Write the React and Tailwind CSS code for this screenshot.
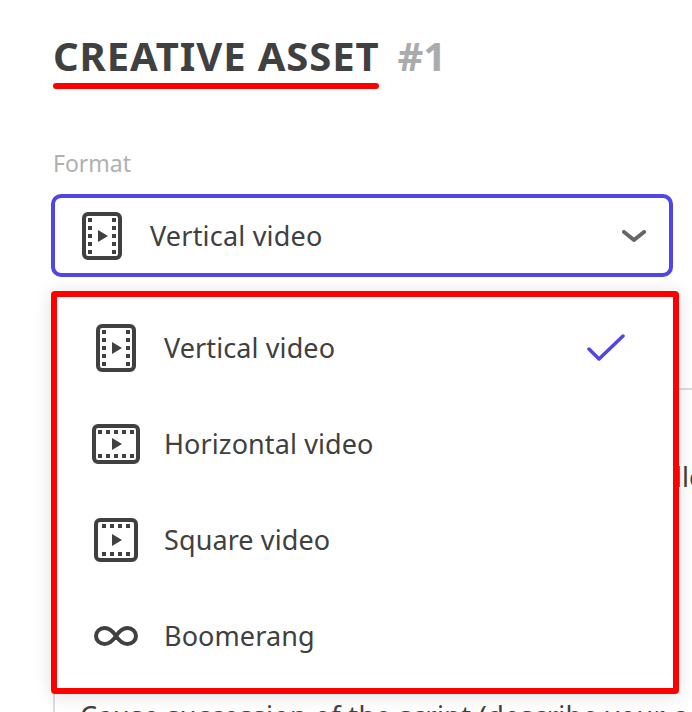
import React from "react";

const F = "[font-family:'Noto_Sans',sans-serif]";

function FilmV({ className }) {
  const ys = [6, 14, 22, 30, 38];
  return (
    <svg viewBox="0 0 40 48" className={className} fill="none">
      <rect x="2" y="2" width="36" height="44" rx="4" stroke="#404040" strokeWidth="4" />
      {ys.map((y) => (
        <g key={y} fill="#404040">
          <rect x="6" y={y} width="4" height="4" />
          <rect x="30" y={y} width="4" height="4" />
        </g>
      ))}
      <path d="M16 18 L26 24 L16 30 Z" fill="#404040" />
    </svg>
  );
}

function FilmH({ className }) {
  const xs = [6, 14, 22, 30, 38];
  return (
    <svg viewBox="0 0 48 40" className={className} fill="none">
      <rect x="2" y="2" width="44" height="36" rx="4" stroke="#404040" strokeWidth="4" />
      {xs.map((x) => (
        <g key={x} fill="#404040">
          <rect x={x} y="6" width="4" height="4" />
          <rect x={x} y="30" width="4" height="4" />
        </g>
      ))}
      <path d="M20 14 L30 20 L20 26 Z" fill="#404040" />
    </svg>
  );
}

function FilmS({ className }) {
  const xs = [8, 16, 24, 32];
  return (
    <svg viewBox="0 0 44 44" className={className} fill="none">
      <rect x="2" y="2" width="40" height="40" rx="4" stroke="#404040" strokeWidth="4" />
      {xs.map((x) => (
        <g key={x} fill="#404040">
          <rect x={x} y="6" width="4" height="4" />
          <rect x={x} y="34" width="4" height="4" />
        </g>
      ))}
      <path d="M18 16 L28 22 L18 28 Z" fill="#404040" />
    </svg>
  );
}

function Inf({ className }) {
  return (
    <svg viewBox="0 0 44 20" className={className} fill="none">
      <path
        d="M22 10 C18 4 14 2 10.500 2 C5.800 2 2 5.600 2 10 C2 14.400 5.800 18 10.500 18 C14 18 18 16 22 10 C26 4 30 2 33.500 2 C38.200 2 42 5.600 42 10 C42 14.400 38.200 18 33.500 18 C30 18 26 16 22 10 Z"
        stroke="#404040"
        strokeWidth="4"
      />
    </svg>
  );
}

function Row({ icon, label, check }) {
  return (
    <div className="h-24 flex items-center relative shrink-0">
      <div className="w-11 ml-[37px] flex justify-center shrink-0">{icon}</div>
      <span className="ml-[26px] text-[27px] text-[#404040] tracking-[0.1px]">{label}</span>
      {check && (
        <svg viewBox="0 0 38 28" className="absolute left-[530px] top-[34px] w-[38px] h-[28px]" fill="none">
          <path d="M2 15 L12 25 L36 2" stroke="#4f46e5" strokeWidth="3.500" strokeLinecap="round" strokeLinejoin="round" />
        </svg>
      )}
    </div>
  );
}

export default function App() {
  return (
    <div className={`relative w-[692px] h-[712px] overflow-hidden bg-white ${F}`}>
      <div className="pl-[53px] pt-[31px]">
        <div className="flex items-start">
          <div className="flex flex-col">
            <span className="text-[40px] leading-[50px] font-bold text-[#404040] whitespace-nowrap tracking-[0.9px]">CREATIVE ASSET</span>
            <div className="h-[6px] mt-[2px] rounded-full bg-[#ff0000]" />
          </div>
          <span className="ml-[18px] text-[40px] leading-[50px] font-bold text-[#ababab]">#1</span>
        </div>
        <div className="mt-[59px] text-[23px] leading-[30px] text-[#b0b0b0]">Format</div>
      </div>
      <div className="ml-[51px] mt-[16px] w-[622px] h-[83px] border-4 border-[#4f46e5] rounded-[10px] flex items-center">
        <FilmV className="ml-[27px] w-10 h-12 shrink-0" />
        <span className="ml-[28px] pt-[2px] text-[27px] text-[#404040] tracking-[0.2px]">Vertical video</span>
        <svg viewBox="0 0 24 12" className="ml-auto mr-[23px] w-6 h-3 shrink-0" fill="none">
          <path d="M2 2 L12 10 L22 2" stroke="#666666" strokeWidth="4" strokeLinecap="round" strokeLinejoin="round" />
        </svg>
      </div>

      <div className="ml-[53px] mt-[111px] w-[700px] border-t-2 border-l-2 border-[#dcdcdc] h-[400px] pl-[25px] pt-[68px]">
        <div className="text-[27px] leading-[38px] text-[#404040] pl-[595px] whitespace-nowrap">lle</div>
        <div className="mt-[201px] text-[27px] leading-[38px] text-[#404040] whitespace-nowrap tracking-[0.4px]">Cause succession of the script (describe your c</div>
      </div>

      <div className="absolute left-[51px] top-[291px] w-[628px] h-[403px] border-[6px] border-[#ff0000] rounded-[4px] bg-white shadow-[0_2px_18px_rgba(0,0,0,0.13)] flex flex-col pt-[3px]">
        <Row icon={<FilmV className="w-10 h-12 shrink-0" />} label="Vertical video" check />
        <Row icon={<FilmH className="w-12 h-10 shrink-0" />} label="Horizontal video" />
        <Row icon={<FilmS className="w-11 h-11 shrink-0" />} label="Square video" />
        <Row icon={<Inf className="w-11 h-5 shrink-0" />} label="Boomerang" />
      </div>
    </div>
  );
}
